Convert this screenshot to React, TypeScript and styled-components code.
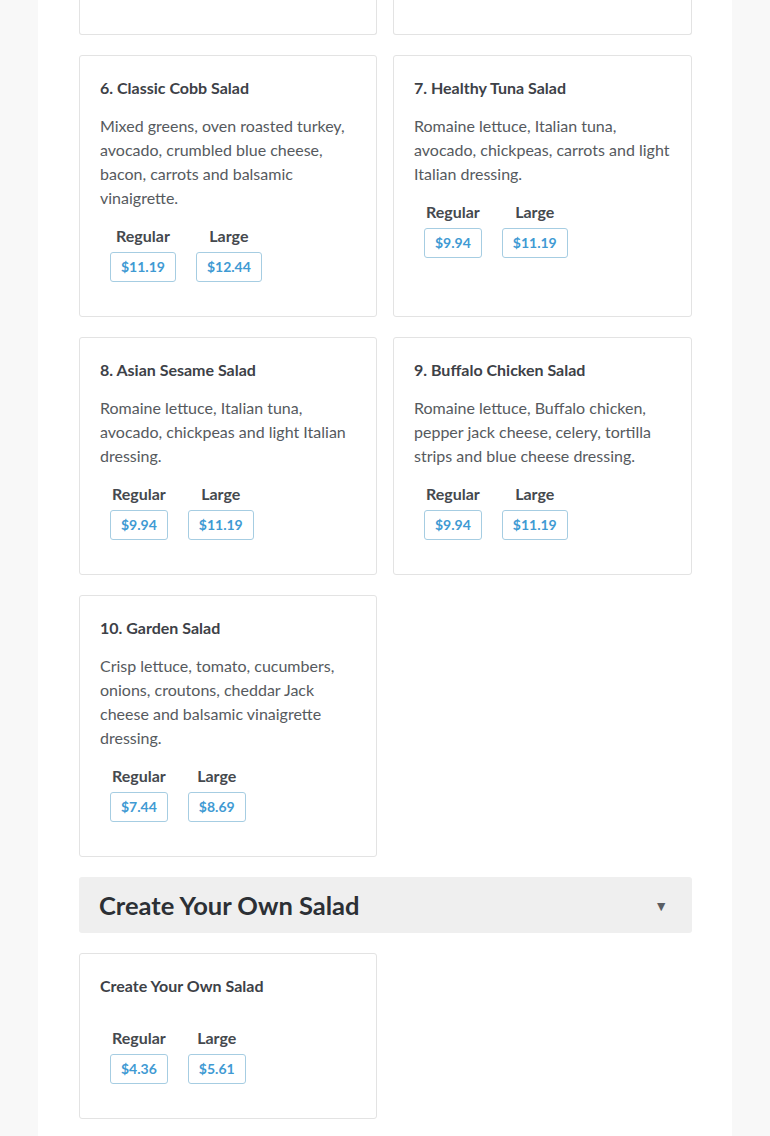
import styled, { createGlobalStyle } from "styled-components";

const GlobalStyle = createGlobalStyle`
  html, body {
    margin: 0;
    padding: 0;
    background: #f8f8f8;
    font-family: Lato, "Open Sans", sans-serif;
  }
`;

interface Salad {
  name: string;
  description: string;
  regular: string;
  large: string;
}

const salads: Salad[] = [
  {
    name: "6. Classic Cobb Salad",
    description:
      "Mixed greens, oven roasted turkey, avocado, crumbled blue cheese, bacon, carrots and balsamic vinaigrette.",
    regular: "$11.19",
    large: "$12.44",
  },
  {
    name: "7. Healthy Tuna Salad",
    description: "Romaine lettuce, Italian tuna, avocado, chickpeas, carrots and light Italian dressing.",
    regular: "$9.94",
    large: "$11.19",
  },
  {
    name: "8. Asian Sesame Salad",
    description: "Romaine lettuce, Italian tuna, avocado, chickpeas and light Italian dressing.",
    regular: "$9.94",
    large: "$11.19",
  },
  {
    name: "9. Buffalo Chicken Salad",
    description:
      "Romaine lettuce, Buffalo chicken, pepper jack cheese, celery, tortilla strips and blue cheese dressing.",
    regular: "$9.94",
    large: "$11.19",
  },
  {
    name: "10. Garden Salad",
    description:
      "Crisp lettuce, tomato, cucumbers, onions, croutons, cheddar Jack cheese and balsamic vinaigrette dressing.",
    regular: "$7.44",
    large: "$8.69",
  },
];

const custom: Salad[] = [
  { name: "Create Your Own Salad", description: "", regular: "$4.36", large: "$5.61" },
];

function MenuCard({ salad }: { salad: Salad }) {
  return (
    <Card>
      <Title>{salad.name}</Title>
      <Description>{salad.description}</Description>
      <Prices>
        <PriceCol>
          <SizeLabel>Regular</SizeLabel>
          <PriceButton>{salad.regular}</PriceButton>
        </PriceCol>
        <PriceCol>
          <SizeLabel>Large</SizeLabel>
          <PriceButton>{salad.large}</PriceButton>
        </PriceCol>
      </Prices>
    </Card>
  );
}

export default function App() {
  return (
    <>
      <GlobalStyle />
      <Page>
        <Menu>
          <ClippedCard />
          <ClippedCard />
          {salads.map((s) => (
            <MenuCard key={s.name} salad={s} />
          ))}
          <SectionHeader>
            <SectionTitle>Create Your Own Salad</SectionTitle>
            <Caret>▼</Caret>
          </SectionHeader>
          {custom.map((s) => (
            <MenuCard key={s.name} salad={s} />
          ))}
        </Menu>
      </Page>
    </>
  );
}

const Page = styled.main`
  width: 694px;
  min-height: 1136px;
  margin-left: 38px;
  background: #ffffff;
  box-sizing: border-box;
  padding: 0 40px 40px 41px;
`;

const Menu = styled.div`
  display: grid;
  grid-template-columns: 298px 299px;
  column-gap: 16px;
  row-gap: 20px;
`;

const Card = styled.div`
  display: flex;
  flex-direction: column;
  align-items: flex-start;
  border: 1px solid #e3e3e3;
  border-radius: 3px;
  padding: 20px 20px 34px;
  background: #fff;
  min-width: 0;
`;

const ClippedCard = styled.div`
  height: 34px;
  border: 1px solid #e3e3e3;
  border-top: none;
  border-radius: 0 0 3px 3px;
`;

const Title = styled.h3`
  margin: 0 0 14px;
  font-size: 16px;
  line-height: 24px;
  font-weight: 700;
  color: #3d4147;
`;

const Description = styled.p`
  margin: 0 0 14px;
  font-size: 16px;
  line-height: 24px;
  color: #565a5e;
`;

const Prices = styled.div`
  display: flex;
  gap: 20px;
  padding-left: 10px;
`;

const PriceCol = styled.div`
  display: flex;
  flex-direction: column;
  align-items: center;
  gap: 4px;
`;

const SizeLabel = styled.span`
  font-size: 16px;
  line-height: 24px;
  font-weight: 700;
  color: #45494e;
`;

const PriceButton = styled.button`
  font-family: Lato, "Open Sans", sans-serif;
  font-size: 14px;
  font-weight: 700;
  line-height: 18px;
  padding: 5px 10px;
  color: #3f9ad3;
  background: #fff;
  border: 1px solid #a6cde2;
  border-radius: 3px;
  cursor: pointer;
`;

const SectionHeader = styled.div`
  grid-column: 1 / -1;
  display: flex;
  align-items: center;
  justify-content: space-between;
  height: 56px;
  box-sizing: border-box;
  padding: 0 24px 0 20px;
  background: #efefef;
  border-radius: 3px;
`;

const SectionTitle = styled.h2`
  margin: 0;
  font-size: 25.5px;
  line-height: 32px;
  font-weight: 700;
  color: #2c3035;
`;

const Caret = styled.span`
  font-size: 14px;
  color: #5a5e63;
`;
